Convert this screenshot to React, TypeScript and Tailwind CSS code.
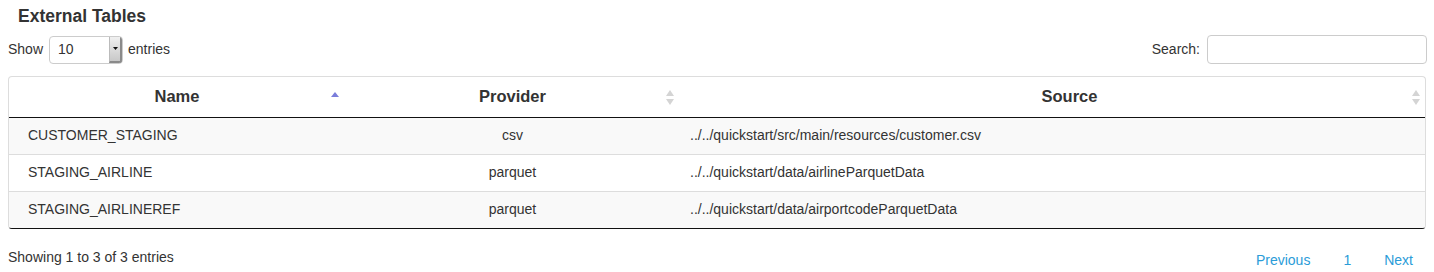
import React from "react";

const rows = [
  { name: "CUSTOMER_STAGING", provider: "csv", source: "../../quickstart/src/main/resources/customer.csv" },
  { name: "STAGING_AIRLINE", provider: "parquet", source: "../../quickstart/data/airlineParquetData" },
  { name: "STAGING_AIRLINEREF", provider: "parquet", source: "../../quickstart/data/airportcodeParquetData" },
];

function SortBoth() {
  return (
    <svg width="8" height="15" viewBox="0 0 8 15" className="block">
      <polygon points="4,0 8,6 0,6" fill="#d4d4d4" />
      <polygon points="0,9 8,9 4,15" fill="#d4d4d4" />
    </svg>
  );
}

function SortAsc() {
  return (
    <svg width="8" height="15" viewBox="0 0 8 15" className="block">
      <polygon points="4,2 8,7 0,7" fill="#7a7ddb" />
    </svg>
  );
}

export default function App() {
  return (
    <div className="w-[1434px] h-[272px] bg-white text-[#333] overflow-hidden" style={{ fontFamily: '"Liberation Sans", Arial, sans-serif' }}>
      <div className="h-[35px] pl-[18px] pt-[4px]">
        <h2 className="text-[17.5px] leading-[24px] font-bold text-[#333]">External Tables</h2>
      </div>
      <div className="flex items-center justify-between h-[29px] pl-[8px] pr-[7px] text-[14px]">
        <div className="flex items-center">
          <span>Show</span>
          <div className="ml-[6px] w-[74px] h-[28px] border border-[#ccc] rounded-[4px] flex items-stretch overflow-hidden bg-white">
            <span className="flex-1 pl-[8px] flex items-center text-[14px]">10</span>
            <span className="w-[13px] bg-gradient-to-b from-[#f0f0f0] to-[#c8c8c8] border-l border-[#bbb] border-r-2 border-r-[#8a8a8a] border-b-2 border-b-[#8a8a8a] flex items-center justify-center">
              <svg width="5" height="3" viewBox="0 0 5 3"><polygon points="0,0 5,0 2.5,3" fill="#111" /></svg>
            </span>
          </div>
          <span className="ml-[5px]">entries</span>
        </div>
        <div className="flex items-center">
          <span>Search:</span>
          <div className="ml-[7px] w-[220px] h-[29px] border border-[#ccc] rounded-[4px] bg-white" />
        </div>
      </div>
      <div className="mx-[8px] mt-[12px] border border-[#ddd] border-b-[#111] rounded-[4px] overflow-hidden">
        <table className="w-full border-collapse table-fixed">
          <colgroup>
            <col className="w-[336px]" />
            <col className="w-[335px]" />
            <col />
          </colgroup>
          <thead>
            <tr className="h-[40px]">
              <th className="relative border-b border-[#111] text-center text-[16.5px] font-bold p-0">
                Name
                <span className="absolute right-[6px] top-[13px]"><SortAsc /></span>
              </th>
              <th className="relative border-b border-[#111] text-center text-[16.5px] font-bold p-0">
                Provider
                <span className="absolute right-[6px] top-[13px]"><SortBoth /></span>
              </th>
              <th className="relative border-b border-[#111] text-center text-[16.5px] font-bold p-0 pl-[34px]">
                Source
                <span className="absolute right-[5px] top-[13px]"><SortBoth /></span>
              </th>
            </tr>
          </thead>
          <tbody className="text-[14px]">
            {rows.map((r, i) => (
              <tr key={r.name} className={`h-[37px] ${i % 2 === 0 ? "bg-[#f9f9f9]" : "bg-white"} ${i < rows.length - 1 ? "border-b border-[#ddd]" : ""}`}>
                <td className="pl-[19px] text-left">{r.name}</td>
                <td className="text-center">{r.provider}</td>
                <td className="pl-[10px] text-left">{r.source}</td>
              </tr>
            ))}
          </tbody>
        </table>
      </div>
      <div className="flex justify-between items-start px-[8px] text-[14px]">
        <div className="mt-[18px] leading-[20px]">Showing 1 to 3 of 3 entries</div>
        <div className="mt-[21px] leading-[20px] flex gap-[33px] pr-[13px] text-[#2b9cd8]">
          <span>Previous</span>
          <span>1</span>
          <span>Next</span>
        </div>
      </div>
    </div>
  );
}
